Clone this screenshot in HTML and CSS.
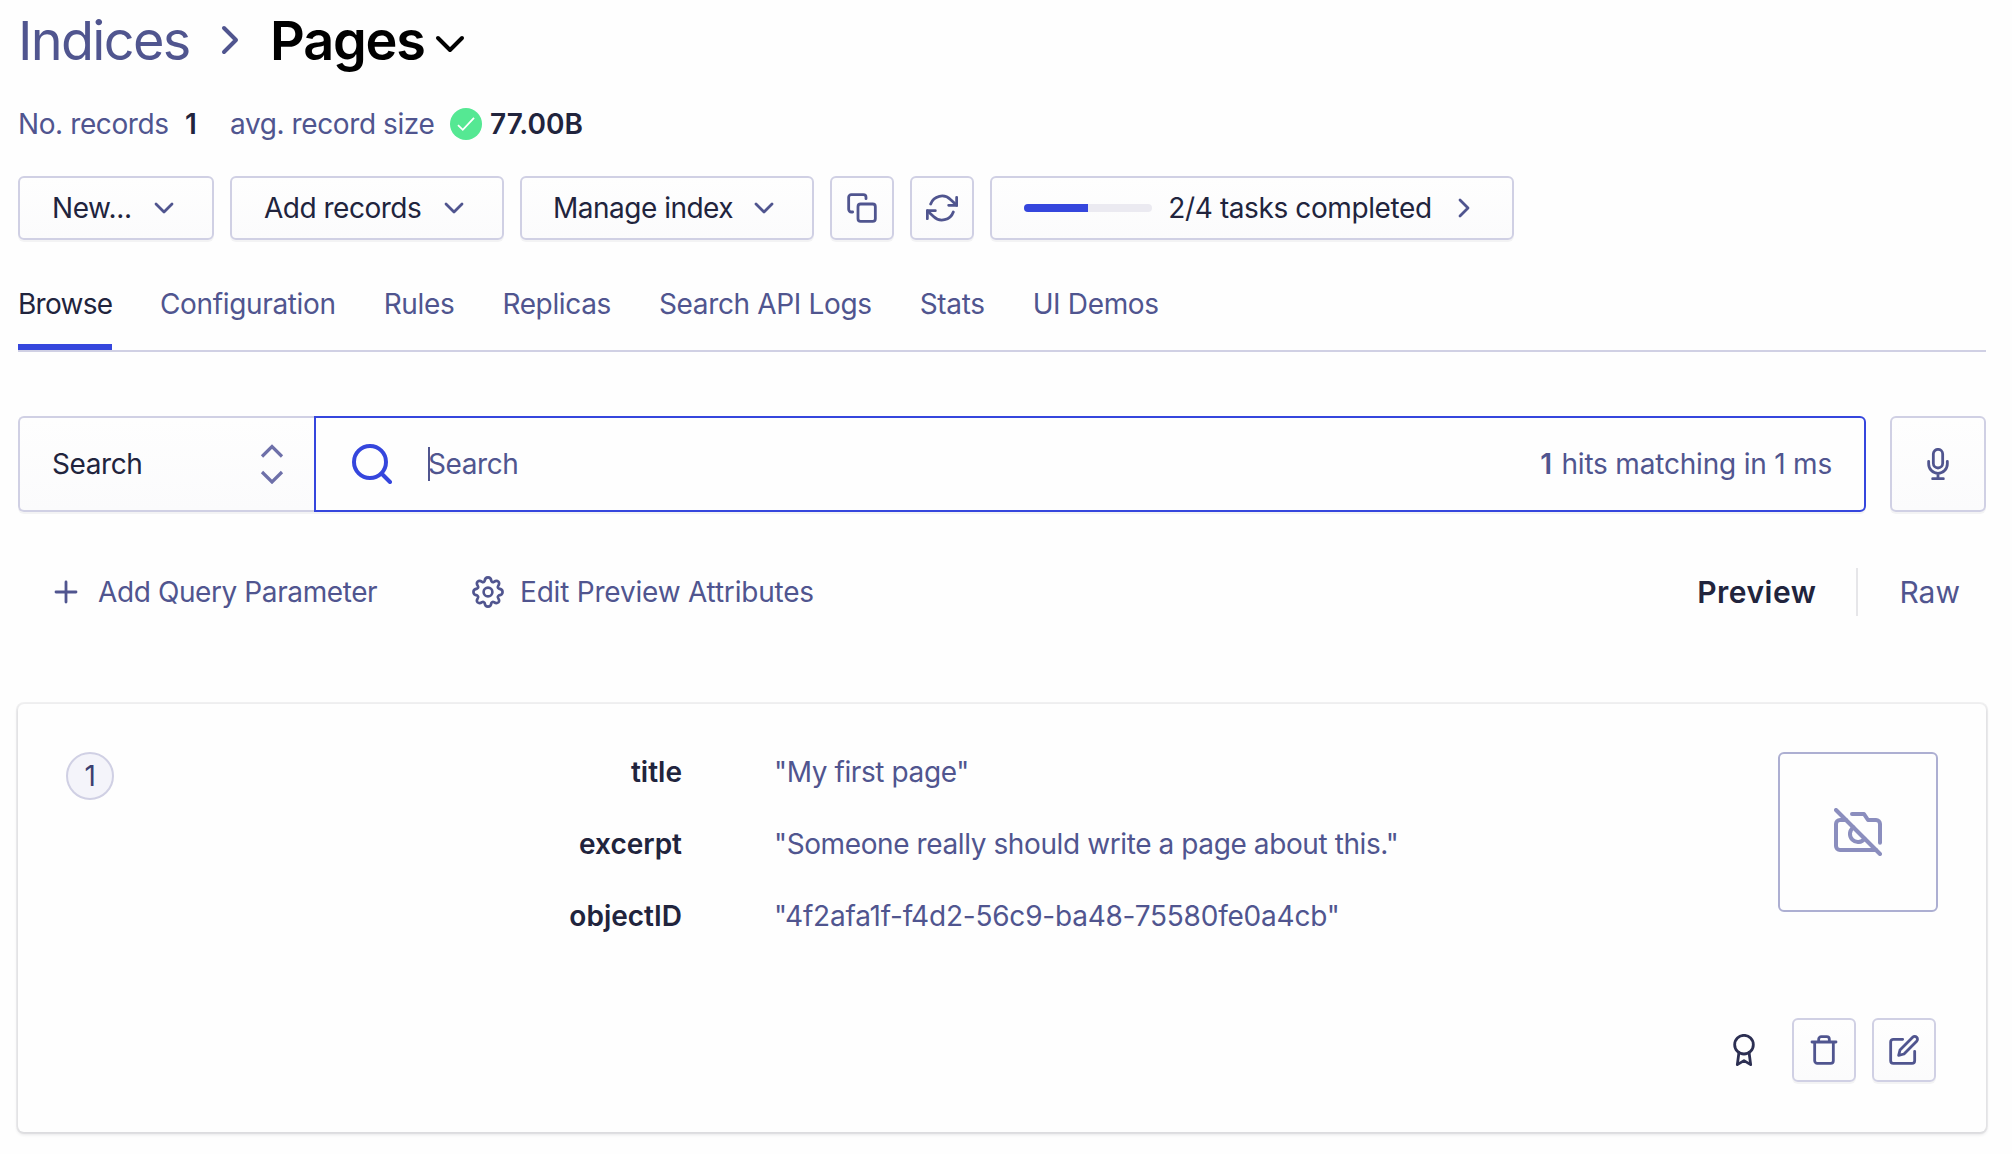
FILE: index.html
```html
<!DOCTYPE html>
<html lang="en">
<head>
<meta charset="utf-8">
<title>Pages</title>
<link rel="stylesheet" href="styles.css">
</head>
<body>
<main class="page">
  <header class="crumbs">
    <a class="crumb">Indices</a>
    <svg class="icon icon-xl crumb-sep" viewBox="0 0 24 24"><path d="M9 18l6-6-6-6"/></svg>
    <h1 class="title">Pages</h1>
    <svg class="icon icon-xl title-arrow" viewBox="0 0 24 24"><path d="M6 9l6 6 6-6"/></svg>
  </header>

  <div class="stats">
    <span class="stat-count">No. records</span>
    <strong class="stat-one">1</strong>
    <span class="stat-size">avg. record size</span>
    <svg class="check" viewBox="0 0 32 32"><circle cx="16" cy="16" r="16"/><path d="M8 17.2l4.8 4.6L24 9.8"/></svg>
    <strong class="stat-bytes">77.00B</strong>
  </div>

  <div class="toolbar">
    <button class="btn btn-new">New...<svg class="icon" viewBox="0 0 24 24"><path d="M6 9l6 6 6-6"/></svg></button>
    <button class="btn btn-add">Add records<svg class="icon" viewBox="0 0 24 24"><path d="M6 9l6 6 6-6"/></svg></button>
    <button class="btn btn-manage">Manage index<svg class="icon" viewBox="0 0 24 24"><path d="M6 9l6 6 6-6"/></svg></button>
    <button class="btn btn-icon"><svg class="icon" viewBox="0 0 24 24"><rect x="9" y="9" width="13" height="13" rx="2"/><path d="M5 15H4a2 2 0 0 1-2-2V4a2 2 0 0 1 2-2h9a2 2 0 0 1 2 2v1"/></svg></button>
    <button class="btn btn-icon"><svg class="icon" viewBox="0 0 24 24"><path d="M23 4v6h-6M1 20v-6h6"/><path d="M3.51 9a9 9 0 0 1 14.85-3.36L23 10M1 14l4.64 4.36A9 9 0 0 0 20.49 15"/></svg></button>
    <button class="btn btn-tasks"><span class="progress"><span class="progress-fill" style="width:50%"></span></span><span>2/4 tasks completed</span><svg class="icon" viewBox="0 0 24 24"><path d="M9 18l6-6-6-6"/></svg></button>
  </div>

  <nav class="tabs">
    <a class="tab active">Browse</a>
    <a class="tab">Configuration</a>
    <a class="tab">Rules</a>
    <a class="tab">Replicas</a>
    <a class="tab">Search API Logs</a>
    <a class="tab">Stats</a>
    <a class="tab">UI Demos</a>
  </nav>

  <div class="search-row">
    <div class="mode">Search
      <svg class="updown" viewBox="0 0 24 40"><path d="M2 12.500L12 2.500 22 12.500M2 28l10 10L22 28"/></svg>
    </div>
    <div class="search-box">
      <svg class="search-icon" viewBox="0 0 40 40"><circle cx="18" cy="18" r="16"/><path d="M29.5 29.5L38 38"/></svg>
      <span class="caret"></span>
      <span class="placeholder">Search</span>
      <span class="hits"><strong>1</strong> hits matching in 1 ms</span>
    </div>
    <button class="mic"><svg class="icon" viewBox="0 0 24 24"><rect x="8.5" y="1" width="7" height="14" rx="3.5"/><path d="M5 10v2a7 7 0 0 0 14 0v-2M12 19v4M8 23h8"/></svg></button>
  </div>

  <div class="options">
    <a class="option"><svg class="icon" viewBox="0 0 24 24"><path d="M12 4.5v15M4.5 12h15"/></svg>Add Query Parameter</a>
    <a class="option option-edit"><svg class="icon" viewBox="0 0 32 32"><circle cx="16" cy="16" r="4.4"/><path d="M16 1.4C18.6 1.4 19.2 3.2 19.4 5.2C20.2 6.2 21.1 6.4 21.9 5.9C23.7 4.6 25.2 4.5 26.4 5.6C27.5 6.8 27.4 8.3 26.1 10.1C25.6 10.9 25.8 11.8 26.8 12.6C28.8 12.8 30.6 13.4 30.6 16C30.6 18.6 28.8 19.2 26.8 19.4C25.8 20.2 25.6 21.1 26.1 21.9C27.4 23.7 27.5 25.2 26.4 26.4C25.2 27.5 23.7 27.4 21.9 26.1C21.1 25.6 20.2 25.8 19.4 26.8C19.2 28.8 18.6 30.6 16 30.6C13.4 30.6 12.8 28.8 12.6 26.8C11.8 25.8 10.9 25.6 10.1 26.1C8.3 27.4 6.8 27.5 5.6 26.4C4.5 25.2 4.6 23.7 5.9 21.9C6.4 21.1 6.2 20.2 5.2 19.4C3.2 19.2 1.4 18.6 1.4 16C1.4 13.4 3.2 12.8 5.2 12.6C6.2 11.8 6.4 10.9 5.9 10.1C4.6 8.3 4.5 6.8 5.6 5.6C6.8 4.5 8.3 4.6 10.1 5.9C10.9 6.4 11.8 6.2 12.6 5.2C12.8 3.2 13.4 1.4 16 1.4Z"/></svg>Edit Preview Attributes</a>
    <div class="views"><strong class="view">Preview</strong><span class="view view-raw">Raw</span></div>
  </div>

  <article class="card">
    <div class="record">
      <span class="rank">1</span>
      <dl class="fields">
        <dt>title</dt><dd>"My first page"</dd>
        <dt>excerpt</dt><dd>"Someone really should write a page about this."</dd>
        <dt>objectID</dt><dd class="object-id">"4f2afa1f-f4d2-56c9-ba48-75580fe0a4cb"</dd>
      </dl>
      <div class="thumb"><svg class="icon icon-xl" viewBox="0 0 24 24"><path d="M1 1l22 22"/><path d="M21 21H3a2 2 0 0 1-2-2V8a2 2 0 0 1 2-2h3m3-3h6l2 3h4a2 2 0 0 1 2 2v9.34m-7.720-2.060a4 4 0 1 1-5.560-5.560"/></svg></div>
    </div>
    <div class="actions">
      <svg class="icon award" viewBox="0 0 24 24"><circle cx="12" cy="8" r="7"/><path d="M8.210 13.890L7 23l5-3 5 3-1.210-9.120"/></svg>
      <button class="btn btn-icon"><svg class="icon" viewBox="0 0 24 24"><path d="M3 6h18M19 6v14a2 2 0 0 1-2 2H7a2 2 0 0 1-2-2V6m3 0V4a2 2 0 0 1 2-2h4a2 2 0 0 1 2 2v2"/></svg></button>
      <button class="btn btn-icon"><svg class="icon" viewBox="0 0 24 24"><path d="M11 4H4a2 2 0 0 0-2 2v14a2 2 0 0 0 2 2h14a2 2 0 0 0 2-2v-7"/><path d="M18.500 2.500a2.120 2.120 0 0 1 3 3L12 15l-4 1 1-4 9.500-9.500z"/></svg></button>
    </div>
  </article>
</main>
</body>
</html>
```
FILE: styles.css
```css
* { box-sizing: border-box; }

body {
  margin: 0;
  background: #fefefe;
  color: #21243d;
  font: 400 28px/40px Inter, "Liberation Sans", sans-serif;
  letter-spacing: -0.4px;
}

strong { font-weight: 600; }

.page {
  display: flex;
  flex-direction: column;
  padding: 8px 26px 20px 18px;
}

.icon {
  flex: none;
  width: 32px;
  height: 32px;
  fill: none;
  stroke: #50558f;
  stroke-width: 2.1;
  stroke-linecap: round;
  stroke-linejoin: round;
}
.icon-xl { width: 48px; height: 48px; stroke-width: 2; }

.crumbs {
  display: flex;
  align-items: center;
  height: 64px;
  font-size: 54px;
  line-height: 64px;
}
.crumb { width: 188px; padding-top: 2px; color: #50558f; letter-spacing: -1.7px; }
.title {
  width: 160px;
  margin: 0 0 0 16px;
  padding-top: 2px;
  font-size: 54px;
  font-weight: 600;
  letter-spacing: -1.2px;
  color: #000;
}
.title-arrow { margin: 8px 0 0 -4px; stroke: #000; }

.stats {
  display: flex;
  align-items: center;
  height: 40px;
  margin-top: 32px;
  color: #50558f;
}
.stats strong { color: #21243d; }
.stat-count { width: 167px; }
.stat-one { width: 45px; }
.stat-size { width: 220px; }
.stats .stat-bytes { letter-spacing: 0; }
.check { width: 32px; height: 32px; margin-right: 8px; }
.check circle { fill: #55e893; }
.check path { fill: none; stroke: #fff; stroke-width: 1.8; }

.toolbar {
  display: flex;
  gap: 16px;
  margin-top: 32px;
}
.btn, .mic {
  display: flex;
  align-items: center;
  justify-content: space-between;
  height: 64px;
  padding: 0 32px;
  border: 2px solid #d0d0e4;
  border-radius: 6px;
  background: linear-gradient(#fefefe, #fbfbfc);
  box-shadow: 0 2px 0 rgba(35, 38, 59, 0.05);
  color: #21243d;
  font: inherit;
  letter-spacing: inherit;
  white-space: nowrap;
}
.btn-new { width: 196px; }
.btn-add { width: 274px; letter-spacing: -0.5px; }
.btn-manage { width: 294px; padding-left: 31px; letter-spacing: -0.5px; }
.btn-tasks { width: 524px; }
.btn-icon { width: 64px; padding: 0; justify-content: center; }

.progress {
  width: 128px;
  height: 8px;
  border-radius: 4px;
  overflow: hidden;
  background: #ebeaf1;
}
.progress-fill { display: block; height: 8px; background: #3546dd; }

.tabs {
  display: flex;
  gap: 48px;
  height: 72px;
  margin-top: 40px;
  border-bottom: 2px solid #d0d0e4;
  color: #50558f;
  letter-spacing: -0.35px;
}
.tab { padding-top: 4px; height: 70px; white-space: nowrap; }
.active { width: 94px; color: #21243d; border-bottom: 6px solid #3546dd; letter-spacing: -0.7px; }

.search-row { display: flex; height: 96px; margin-top: 64px; }
.mode {
  display: flex;
  align-items: center;
  justify-content: space-between;
  width: 296px;
  padding: 0 30px 0 32px;
  border: 2px solid #d0d0e4;
  border-right: 0;
  border-radius: 6px 0 0 6px;
  background: linear-gradient(#fefefe, #fbfbfc);
  box-shadow: 0 2px 0 rgba(35, 38, 59, 0.05);
}
.updown { width: 24px; height: 40px; fill: none; stroke: #6e70a9; stroke-width: 3.2; }
.search-box {
  display: flex;
  flex: 1;
  align-items: center;
  padding: 0 32px 0 36px;
  border: 2px solid #3546dd;
  border-radius: 0 6px 6px 0;
  box-shadow: 0 2px 0 rgba(35, 38, 59, 0.05);
  color: #50558f;
}
.search-icon { width: 40px; height: 40px; fill: none; stroke: #3546dd; stroke-width: 4; stroke-linecap: round; }
.caret { width: 2px; height: 34px; margin-left: 36px; background: #50558f; }
.placeholder { margin-left: -2px; }
.hits { margin-left: auto; letter-spacing: -0.2px; }
.hits strong { margin-right: 2px; }
.mic { width: 96px; height: 96px; margin-left: 24px; padding: 0; justify-content: center; }

.options {
  display: flex;
  align-items: center;
  height: 48px;
  margin-top: 56px;
  padding-left: 32px;
  color: #50558f;
}
.option { display: flex; align-items: center; gap: 16px; width: 422px; white-space: nowrap; }
.option-edit { letter-spacing: -0.2px; }
.option-edit .icon { stroke-width: 2.6; }
.views { display: flex; margin-left: auto; font-size: 30px; line-height: 48px; letter-spacing: 0; }
.view { padding-right: 40px; color: #21243d; letter-spacing: 0.5px; }
.view-raw { padding: 0 26px 0 41px; border-left: 2px solid #e6e6e9; color: #50558f; letter-spacing: 0; }

.card {
  display: flex;
  flex-direction: column;
  justify-content: space-between;
  height: 428px;
  margin-top: 88px;
  padding: 48px 48px 50px;
  border-radius: 6px;
  background: #fefefe;
  box-shadow: 0 0 0 2px rgba(35, 38, 59, 0.06), 0 2px 3px 1px rgba(35, 38, 59, 0.1);
}
.record { display: flex; align-items: flex-start; }
.rank {
  width: 48px;
  height: 48px;
  border: 2px solid #d0d0e4;
  border-radius: 50%;
  background: #f4f4fa;
  color: #3c3f70;
  line-height: 44px;
  text-align: center;
}
.fields {
  display: grid;
  grid-template-columns: 568px 1fr;
  gap: 32px 92px;
  flex: 1;
  margin: 0;
}
.fields dt { font-weight: 600; text-align: right; letter-spacing: 0; }
.fields dd { margin: 0; color: #50558f; }
.fields .object-id { letter-spacing: -0.22px; }
.thumb {
  display: grid;
  place-items: center;
  width: 160px;
  height: 160px;
  border: 2px solid #adafd2;
  border-radius: 6px;
}
.thumb .icon { stroke: #8b8ebe; }
.actions { display: flex; align-items: center; justify-content: flex-end; gap: 16px; padding-right: 2px; }
.award { margin-right: 16px; stroke: #2c2f52; }
```
